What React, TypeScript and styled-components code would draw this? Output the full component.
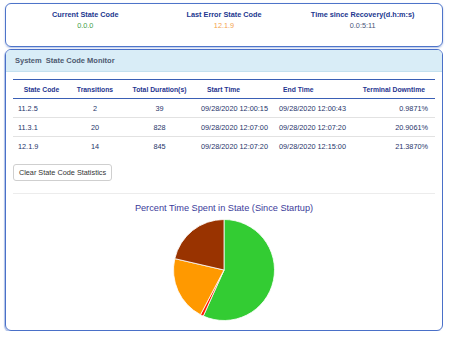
import React from "react"
import styled, { createGlobalStyle } from "styled-components"

const GlobalStyle = createGlobalStyle`
  html, body {
    margin: 0;
    padding: 0;
    background: #ffffff;
    font-family: "Liberation Sans", Arial, sans-serif;
  }
`

const Page = styled.div`
  width: 450px;
  padding: 3px 7px 0 5px;
  box-sizing: border-box;
  display: flex;
  flex-direction: column;
  gap: 2px;
`

const StatusBar = styled.div`
  height: 44px;
  box-sizing: border-box;
  border: 1px solid #4e74c9;
  border-radius: 6px;
  box-shadow: 0 1px 2px rgba(78, 116, 201, 0.45);
  display: grid;
  grid-template-columns: repeat(3, 1fr);
  padding: 6px 10px 0;
`

const StatusItem = styled.div`
  display: flex;
  flex-direction: column;
  align-items: center;
  gap: 2px;
`

const StatusLabel = styled.div`
  font-size: 7.3px;
  font-weight: bold;
  color: #22378f;
  line-height: 9px;
`

const StatusValue = styled.div<{ $color: string }>`
  font-size: 7.3px;
  color: ${({ $color }) => $color};
  line-height: 9px;
`

const Panel = styled.div`
  height: 282px;
  box-sizing: border-box;
  border: 1px solid #4a70c8;
  border-radius: 6px;
  box-shadow: -1px 1px 1px rgba(74, 112, 200, 0.45);
  overflow: hidden;
  display: flex;
  flex-direction: column;
`

const PanelHeader = styled.div`
  height: 21px;
  flex-shrink: 0;
  background: #d9edf7;
  border-bottom: 1px solid #c4e1ef;
  display: flex;
  align-items: center;
  padding-left: 9px;
  font-size: 7.5px;
  font-weight: bold;
  color: #4e5a70;
  white-space: pre;
`

const PanelBody = styled.div`
  padding: 7px 7px 0;
  display: flex;
  flex-direction: column;
`

const COLS = "57px 50px 79px 76px 80px 80px"

const Table = styled.div`
  display: grid;
  grid-template-columns: ${COLS};
  border-top: 1.5px solid #3a5fb5;
`

const HeadCell = styled.div<{ $align: string; $pad: string }>`
  height: 18px;
  display: flex;
  align-items: center;
  justify-content: ${({ $align }) => $align};
  padding: ${({ $pad }) => $pad};
  font-size: 6.8px;
  font-weight: bold;
  color: #1f3590;
  border-bottom: 1.5px solid #3a5fb5;
`

const Cell = styled.div<{ $align: string; $pad: string; $last?: boolean }>`
  height: 18px;
  display: flex;
  align-items: center;
  justify-content: ${({ $align }) => $align};
  padding: ${({ $pad }) => $pad};
  font-size: 7.3px;
  color: #26346a;
  border-bottom: ${({ $last }) => ($last ? "none" : "1px solid #e2e2e2")};
  white-space: nowrap;
`

const ClearButton = styled.button`
  align-self: flex-start;
  margin-top: 9px;
  height: 17px;
  width: 99px;
  padding: 0;
  background: #ffffff;
  border: 1px solid #cfcfcf;
  border-radius: 3px;
  font-family: "Liberation Sans", Arial, sans-serif;
  font-size: 7.3px;
  color: #333333;
`

const Divider = styled.div`
  margin-top: 12px;
  height: 0;
  border-top: 1px solid #ececec;
`

const ChartTitle = styled.div`
  margin-top: 9px;
  text-align: center;
  font-size: 9.2px;
  color: #3b3b9a;
  line-height: 11px;
`

const PieWrap = styled.div`
  display: flex;
  justify-content: center;
  margin-top: 4px;
`

type Col = { head: string; hAlign: string; hPad: string; dAlign: string; dPad: string }

const columns: Col[] = [
  { head: "State Code", hAlign: "center", hPad: "0", dAlign: "flex-start", dPad: "0 0 0 5px" },
  { head: "Transitions", hAlign: "center", hPad: "0", dAlign: "center", dPad: "0" },
  { head: "Total Duration(s)", hAlign: "center", hPad: "0", dAlign: "center", dPad: "0" },
  { head: "Start Time", hAlign: "flex-start", hPad: "0 0 0 8px", dAlign: "flex-start", dPad: "0 0 0 2px" },
  { head: "End Time", hAlign: "flex-start", hPad: "0 0 0 8px", dAlign: "flex-start", dPad: "0 0 0 4px" },
  { head: "Terminal Downtime", hAlign: "flex-end", hPad: "0 10px 0 0", dAlign: "flex-end", dPad: "0 7px 0 0" },
]

const rows = [
  ["11.2.5", "2", "39", "09/28/2020 12:00:15", "09/28/2020 12:00:43", "0.9871%"],
  ["11.3.1", "20", "828", "09/28/2020 12:07:00", "09/28/2020 12:07:20", "20.9061%"],
  ["12.1.9", "14", "845", "09/28/2020 12:07:20", "09/28/2020 12:15:00", "21.3870%"],
]

const slices = [
  { value: 56.7198, color: "#33cc33" },
  { value: 0.9871, color: "#ff1a00" },
  { value: 20.9061, color: "#ff9900" },
  { value: 21.387, color: "#993300" },
]

const PieChart: React.FC = () => {
  const r = 50.5
  const c = 52
  let start = 0
  return (
    <svg width={104} height={104} viewBox="0 0 104 104">
      {slices.map((s, i) => {
        const a0 = (start / 100) * Math.PI * 2
        start += s.value
        const a1 = (start / 100) * Math.PI * 2
        const x0 = c + r * Math.sin(a0)
        const y0 = c - r * Math.cos(a0)
        const x1 = c + r * Math.sin(a1)
        const y1 = c - r * Math.cos(a1)
        const large = a1 - a0 > Math.PI ? 1 : 0
        return (
          <path
            key={i}
            d={`M${c},${c} L${x0},${y0} A${r},${r} 0 ${large} 1 ${x1},${y1} Z`}
            fill={s.color}
            stroke="#ffffff"
            strokeWidth={0.8}
          />
        )
      })}
    </svg>
  )
}

export default function App() {
  return (
    <>
      <GlobalStyle />
      <Page>
        <StatusBar>
          <StatusItem>
            <StatusLabel>Current State Code</StatusLabel>
            <StatusValue $color="#3e9e46">0.0.0</StatusValue>
          </StatusItem>
          <StatusItem>
            <StatusLabel>Last Error State Code</StatusLabel>
            <StatusValue $color="#f4a34e">12.1.9</StatusValue>
          </StatusItem>
          <StatusItem>
            <StatusLabel>Time since Recovery(d.h:m:s)</StatusLabel>
            <StatusValue $color="#4a5578">0.0:5:11</StatusValue>
          </StatusItem>
        </StatusBar>

        <Panel>
          <PanelHeader>{"System  State Code Monitor"}</PanelHeader>
          <PanelBody>
            <Table>
              {columns.map(col => (
                <HeadCell key={col.head} $align={col.hAlign} $pad={col.hPad}>
                  {col.head}
                </HeadCell>
              ))}
              {rows.map((row, ri) =>
                row.map((val, ci) => (
                  <Cell
                    key={`${ri}-${ci}`}
                    $align={columns[ci].dAlign}
                    $pad={columns[ci].dPad}
                    $last={ri === rows.length - 1}
                  >
                    {val}
                  </Cell>
                ))
              )}
            </Table>
            <ClearButton>Clear State Code Statistics</ClearButton>
            <Divider />
            <ChartTitle>Percent Time Spent in State (Since Startup)</ChartTitle>
            <PieWrap>
              <PieChart />
            </PieWrap>
          </PanelBody>
        </Panel>
      </Page>
    </>
  )
}
